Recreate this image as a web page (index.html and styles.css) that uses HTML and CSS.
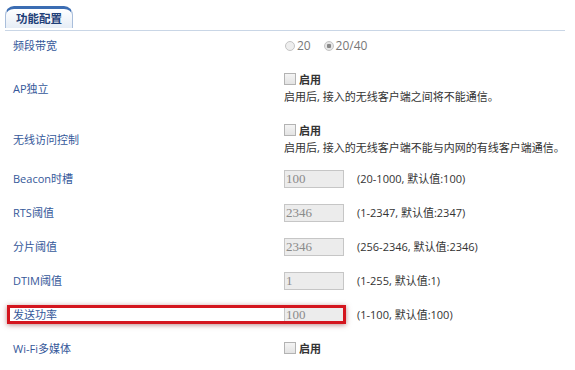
FILE: index.html
```html
<!DOCTYPE html>
<html lang="zh-CN">
<head>
    <meta charset="UTF-8">
    <title>功能配置</title>
    <link rel="stylesheet" href="styles.css">
</head>
<body>
    <div class="tabs">
        <div class="tab">功能配置</div>
    </div>

    <div class="form">
        <div class="row row-band">
            <div class="label">频段带宽</div>
            <div class="field">
                <span class="radio"></span><span class="opt">20</span>
                <span class="radio checked"></span><span class="opt">20/40</span>
            </div>
        </div>

        <div class="row row-ap">
            <div class="label">AP独立</div>
            <div class="field">
                <div><span class="check"></span><b class="enable">启用</b></div>
                <div class="desc">启用后, 接入的无线客户端之间将不能通信。</div>
            </div>
        </div>

        <div class="row row-acl">
            <div class="label">无线访问控制</div>
            <div class="field">
                <div><span class="check"></span><b class="enable">启用</b></div>
                <div class="desc">启用后, 接入的无线客户端不能与内网的有线客户端通信。</div>
            </div>
        </div>

        <div class="row">
            <div class="label">Beacon时槽</div>
            <div class="field"><span class="input">100</span><span class="hint">(20-1000, 默认值:100)</span></div>
        </div>

        <div class="row">
            <div class="label">RTS阈值</div>
            <div class="field"><span class="input">2346</span><span class="hint">(1-2347, 默认值:2347)</span></div>
        </div>

        <div class="row">
            <div class="label">分片阈值</div>
            <div class="field"><span class="input">2346</span><span class="hint">(256-2346, 默认值:2346)</span></div>
        </div>

        <div class="row">
            <div class="label">DTIM阈值</div>
            <div class="field"><span class="input">1</span><span class="hint">(1-255, 默认值:1)</span></div>
        </div>

        <div class="row row-marked">
            <div class="label">发送功率</div>
            <div class="field"><span class="input">100</span><span class="hint">(1-100, 默认值:100)</span></div>
            <div class="mark"></div>
        </div>

        <div class="row">
            <div class="label">Wi-Fi多媒体</div>
            <div class="field"><span class="check"></span><b class="enable">启用</b></div>
        </div>
    </div>
</body>
</html>
```

FILE: styles.css
```css
body {
    margin: 0;
    background: #fff;
    font-family: "Open Sans", "Noto Sans CJK SC", sans-serif;
    font-size: 11px;
    color: #333;
    width: 575px;
    height: 370px;
    overflow: hidden;
}
.tabs {
    margin: 0 10px 0 5px;
    padding-top: 6px;
    height: 24px;
    border-bottom: 1px solid #c9d6e6;
}
.tab {
    width: 66px;
    height: 19px;
    line-height: 20px;
    text-align: center;
    font-weight: bold;
    color: #1f3f78;
    font-size: 11.5px;
    border-top: 3px solid #3b6db3;
    border-left: 1px solid #a9bedb;
    border-right: 1px solid #a9bedb;
    border-radius: 9px 9px 0 0;
    background: linear-gradient(#ffffff, #e6edf6);
}
.form {
    padding-left: 13px;
}
.row {
    position: relative;
    display: grid;
    grid-template-columns: 271px 1fr;
    align-items: center;
    height: 34px;
}
.row-band {
    height: 28px;
}
.row-ap {
    height: 58px;
}
.row-acl {
    height: 44px;
}
.label {
    color: #35589a;
}
.field {
    line-height: 17px;
}
.radio {
    display: inline-block;
    width: 8px;
    height: 8px;
    border: 1px solid #c4c4c4;
    border-radius: 50%;
    background: #eee;
    vertical-align: -1px;
    margin: 0 2px 0 1px;
}
.radio.checked {
    background: radial-gradient(#888 0 2px, #e6e6e6 2.5px);
}
.opt {
    color: #777;
    font-size: 12px;
    margin-right: 9px;
}
.check {
    display: inline-block;
    width: 10px;
    height: 10px;
    border: 1px solid #b3b3b3;
    background: linear-gradient(#f4f4f4, #e3e3e3);
    vertical-align: -1px;
    margin-right: 3px;
}
.enable {
    color: #333;
}
.desc {
    color: #333;
}
.input {
    display: inline-block;
    box-sizing: border-box;
    width: 60px;
    height: 18px;
    line-height: 16px;
    border: 1px solid #c6c6c6;
    background: #ececec;
    font-family: "Liberation Serif", serif;
    font-size: 13px;
    color: #8a8a8a;
    padding-left: 1px;
    vertical-align: middle;
    margin-right: 13px;
}
.hint {
    vertical-align: middle;
}
.mark {
    position: absolute;
    left: -6px;
    top: 8px;
    width: 333px;
    height: 13px;
    border: 3px solid #d4151e;
    box-shadow: 0 1px 5px rgba(120, 20, 20, 0.5);
    pointer-events: none;
}
```
